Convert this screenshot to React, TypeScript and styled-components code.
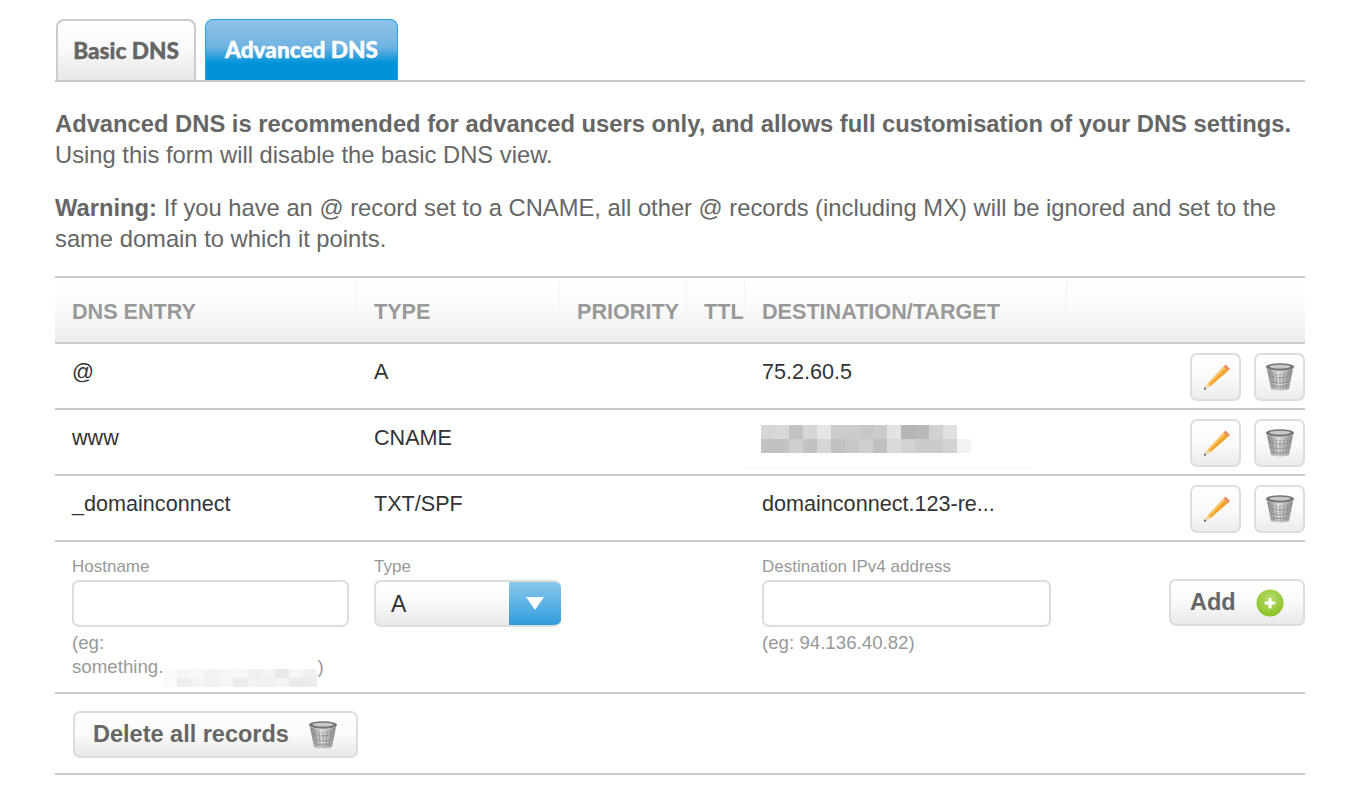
import { createGlobalStyle, styled } from 'styled-components';

const GlobalStyle = createGlobalStyle`
    body {
        margin: 0;
        background: #fff;
        font-family: 'Liberation Sans', Arial, sans-serif;
        color: #666;
    }
`;

const columns = '302px 203px 127px 58px 322px 238px';

const Page = styled.div`
    width: 1250px;
    padding: 19px 46px 0 55px;
`;

const Tabs = styled.div`
    display: flex;
    gap: 9px;
    padding-left: 1px;
    height: 61px;
    border-bottom: 2px solid #ccc;
`;

const Tab = styled.div<{ $active?: boolean }>`
    box-sizing: border-box;
    height: 61px;
    padding-top: 15px;
    text-align: center;
    font-family: Lato, 'Liberation Sans', sans-serif;
    font-weight: 900;
    font-size: 22.6px;
    line-height: 30px;
    -webkit-text-stroke: 0.4px currentColor;
    border-radius: 8px 8px 0 0;
    border-style: solid;
    border-width: ${({ $active }) => ($active ? '1px 1px 0' : '2px 2px 0')};
    border-color: ${({ $active }) => ($active ? '#2aa0dc' : '#ccc')};
    width: ${({ $active }) => ($active ? '193px' : '140px')};
    color: ${({ $active }) => ($active ? '#fff' : '#666')};
    background: ${({ $active }) =>
        $active
            ? 'linear-gradient(#8fc3e8 0%, #6fb3e2 45%, #0093d9 72%, #0093d9 100%)'
            : 'linear-gradient(#fff 0%, #fafafa 45%, #e8e8e8 100%)'};
`;

const Intro = styled.p`
    margin: 26px 0 0;
    font-size: 23.75px;
    line-height: 31px;
`;

const Warning = styled(Intro)`
    margin-top: 22px;
`;

const Table = styled.div`
    margin-top: 22px;
    border-top: 2px solid #ccc;
`;

const Row = styled.div`
    position: relative;
    display: grid;
    grid-template-columns: ${columns};
    height: 64px;
    border-bottom: 2px solid #ccc;
    font-size: 21.6px;
    color: #333;
`;

const HeaderRow = styled(Row)`
    background: linear-gradient(#fff 0%, #fcfcfc 40%, #ececec 100%);
`;

const HeaderCell = styled.div`
    box-sizing: border-box;
    padding: 22px 0 0 17px;
    font-size: 21.6px;
    line-height: 24px;
    font-weight: bold;
    color: #999;
    white-space: nowrap;
    border-right: 1px solid #f4f4f4;
`;

const Cell = styled.div`
    padding: 16px 0 0 17px;
    line-height: 24px;
    white-space: nowrap;
`;

const Actions = styled.div`
    grid-column: 6;
    display: flex;
    justify-content: flex-end;
    gap: 13px;
    padding-top: 9px;
`;

const IconButton = styled.button`
    box-sizing: border-box;
    width: 51px;
    height: 48px;
    padding: 0;
    display: flex;
    align-items: center;
    justify-content: center;
    border: 2px solid #ddd;
    border-radius: 7px;
    background: linear-gradient(#fff 0%, #fafafa 50%, #ececec 100%);
`;

const Mosaic = styled.div`
    margin: -1px 0 0 -1px;
`;

const MosaicRow = styled.div`
    display: flex;
`;

const Tile = styled.span<{ $shade: number; $h: number }>`
    width: 14px;
    height: ${({ $h }) => $h}px;
    background: rgb(${({ $shade }) => `${$shade}, ${$shade}, ${$shade}`});
`;

const MosaicEdge = styled.div`
    position: absolute;
    left: 690px;
    top: 57px;
    width: 288px;
    height: 1px;
    background: #f3f3f3;
`;

const FormRow = styled(Row)`
    height: 150px;
`;

const Field = styled.div`
    padding: 15px 0 0 17px;
`;

const Label = styled.div`
    font-size: 17px;
    line-height: 20px;
    color: #999;
`;

const Input = styled.div<{ $width: number }>`
    box-sizing: border-box;
    width: ${({ $width }) => $width}px;
    height: 47px;
    margin-top: 3px;
    border: 2px solid #ddd;
    border-radius: 7px;
    background: #fff;
`;

const Hint = styled.div`
    margin-top: 4px;
    font-size: 18.7px;
    line-height: 24px;
    color: #999;
`;

const HintMask = styled.span`
    display: inline-flex;
    flex-direction: column;
    vertical-align: -5px;
`;

const Select = styled.div`
    box-sizing: border-box;
    display: flex;
    width: 187px;
    height: 47px;
    margin-top: 3px;
    border: 2px solid #ddd;
    border-right: none;
    border-radius: 7px;
    overflow: hidden;
    background: linear-gradient(#fff 0%, #fafafa 45%, #e8e8e8 100%);
`;

const SelectValue = styled.div`
    flex: 1;
    padding-left: 15px;
    font-size: 23px;
    line-height: 44px;
    color: #333;
`;

const SelectArrow = styled.div`
    width: 52px;
    margin: -2px 0;
    display: flex;
    align-items: center;
    justify-content: center;
    background: linear-gradient(#8fc9ec 0%, #2b9bdb 100%);
`;

const TextButton = styled.button<{ $width: number }>`
    box-sizing: border-box;
    width: ${({ $width }) => $width}px;
    height: 47px;
    display: flex;
    align-items: center;
    justify-content: space-between;
    border: 2px solid #ddd;
    border-radius: 7px;
    background: linear-gradient(#fff 0%, #fafafa 50%, #e8e8e8 100%);
    font-family: 'Liberation Sans', Arial, sans-serif;
    font-weight: bold;
    font-size: 23.5px;
    color: #666;
`;

const AddButton = styled(TextButton)`
    padding: 0 19px 0 19px;
    margin-top: 28px;
    margin-left: auto;
`;

const DeleteButton = styled(TextButton)`
    padding: 0 17px 0 18px;
`;

const DeleteRow = styled(Row)`
    display: flex;
    align-items: flex-start;
    box-sizing: border-box;
    height: 81px;
    padding: 17px 0 0 18px;
`;

const Pencil = () => (
    <svg width="30" height="30" viewBox="0 0 30 30">
        <path d="M3 27.8 L3.6 25 L5.6 27 Z" fill="#444" />
        <path d="M3.6 25 L6.8 21.4 L9.4 24.2 L5.6 27 Z" fill="#f1d9a8" />
        <path d="M6.8 21.4 L22.6 4.6 L27 9 L9.4 24.2 Z" fill="#f2a42f" />
        <path d="M6.8 21.4 L22.6 4.6 L24.2 6.2 L8 22.7 Z" fill="#f8c766" />
        <path d="M22.6 4.6 L24.6 2.6 L29 7 L27 9 Z" fill="#e58c62" />
    </svg>
);

const Trash = ({ size = 32 }: { size?: number }) => (
    <svg width={size} height={size} viewBox="0 0 32 32">
        <defs>
            <linearGradient id="can" x1="0" x2="1" y1="0" y2="0">
                <stop offset="0" stopColor="#808080" />
                <stop offset="0.45" stopColor="#dcdcdc" />
                <stop offset="1" stopColor="#858585" />
            </linearGradient>
        </defs>
        <ellipse cx="16" cy="6" rx="14" ry="3.8" fill="#757575" />
        <ellipse cx="16" cy="5.6" rx="10.5" ry="1.9" fill="#c8c8c8" />
        <path d="M3 8 L7 28 Q16 31.5 25 28 L29 8 Q16 12.5 3 8 Z" fill="url(#can)" />
        <path
            d="M8 12 L10.2 27 M12 13 L13.2 28 M16 13 L16 29 M20 13 L18.8 28 M24 12 L21.8 27 M6 15 Q16 19 26 15 M7 20 Q16 23.5 25 20 M8 24.5 Q16 27.5 24 24.5"
            stroke="#8c8c8c"
            strokeWidth="1.3"
            fill="none"
            strokeDasharray="1.6 1.2"
        />
    </svg>
);

const PlusBadge = () => (
    <svg width="28" height="28" viewBox="0 0 28 28">
        <defs>
            <radialGradient id="lime" cx="0.5" cy="0.35" r="0.7">
                <stop offset="0" stopColor="#b9dd6e" />
                <stop offset="1" stopColor="#86bf1e" />
            </radialGradient>
        </defs>
        <circle cx="14" cy="14" r="13.5" fill="url(#lime)" />
        <path d="M14 10 V18 M10 14 H18" stroke="#fff" strokeWidth="3.2" strokeLinecap="round" />
    </svg>
);

const Triangle = () => (
    <svg width="18" height="13" viewBox="0 0 18 13">
        <path d="M0 0 H18 L9 13 Z" fill="#fff" />
    </svg>
);

const headers = ['DNS ENTRY', 'TYPE', 'PRIORITY', 'TTL', 'DESTINATION/TARGET'];

const records = [
    { entry: '@', type: 'A', destination: '75.2.60.5' },
    { entry: 'www', type: 'CNAME', destination: null },
    { entry: '_domainconnect', type: 'TXT/SPF', destination: 'domainconnect.123-re...' },
];

const destinationTiles = [
    [214, 217, 194, 214, 229, 203, 203, 200, 203, 226, 181, 185, 209, 224],
    [194, 194, 207, 194, 214, 194, 200, 207, 192, 218, 210, 203, 203, 210, 242],
];

const hintTiles = [
    [250, 246, 248, 242, 246, 248, 240, 244, 232, 246, 240],
    [250, 238, 244, 240, 246, 236, 242, 240, 244, 234, 236],
];

const App = () => {
    return (
        <Page>
            <GlobalStyle />
            <Tabs>
                <Tab>Basic DNS</Tab>
                <Tab $active>Advanced DNS</Tab>
            </Tabs>
            <Intro>
                <b>Advanced DNS is recommended for advanced users only, and allows full customisation of your DNS settings.</b>
                <br />
                Using this form will disable the basic DNS view.
            </Intro>
            <Warning>
                <b>Warning:</b> If you have an @ record set to a CNAME, all other @ records (including MX) will be ignored and set to the same domain to which it points.
            </Warning>
            <Table>
                <HeaderRow>
                    {headers.map((header) => (
                        <HeaderCell key={header}>{header}</HeaderCell>
                    ))}
                </HeaderRow>
                {records.map((record) => (
                    <Row key={record.entry}>
                        <Cell>{record.entry}</Cell>
                        <Cell>{record.type}</Cell>
                        <Cell />
                        <Cell />
                        <Cell>
                            {record.destination ?? (
                                <Mosaic>
                                    {destinationTiles.map((tiles, i) => (
                                        <MosaicRow key={i}>
                                            {tiles.map((shade, j) => (
                                                <Tile key={j} $shade={shade} $h={14} />
                                            ))}
                                        </MosaicRow>
                                    ))}
                                </Mosaic>
                            )}
                        </Cell>
                        <Actions>
                            <IconButton aria-label="edit">
                                <Pencil />
                            </IconButton>
                            <IconButton aria-label="delete">
                                <Trash />
                            </IconButton>
                        </Actions>
                        {!record.destination && <MosaicEdge />}
                    </Row>
                ))}
                <FormRow>
                    <Field>
                        <Label>Hostname</Label>
                        <Input $width={277} />
                        <Hint>
                            (eg:
                            <br />
                            something.
                            <HintMask>
                                {hintTiles.map((tiles, i) => (
                                    <MosaicRow key={i}>
                                        {tiles.map((shade, j) => (
                                            <Tile key={j} $shade={shade} $h={9} />
                                        ))}
                                    </MosaicRow>
                                ))}
                            </HintMask>
                            )
                        </Hint>
                    </Field>
                    <Field>
                        <Label>Type</Label>
                        <Select>
                            <SelectValue>A</SelectValue>
                            <SelectArrow>
                                <Triangle />
                            </SelectArrow>
                        </Select>
                    </Field>
                    <Field />
                    <Field />
                    <Field>
                        <Label>Destination IPv4 address</Label>
                        <Input $width={289} />
                        <Hint>(eg: 94.136.40.82)</Hint>
                    </Field>
                    <Actions>
                        <AddButton $width={136}>
                            Add
                            <PlusBadge />
                        </AddButton>
                    </Actions>
                </FormRow>
                <DeleteRow>
                    <DeleteButton $width={285}>
                        Delete all records
                        <Trash />
                    </DeleteButton>
                </DeleteRow>
            </Table>
        </Page>
    );
};

export default App;
